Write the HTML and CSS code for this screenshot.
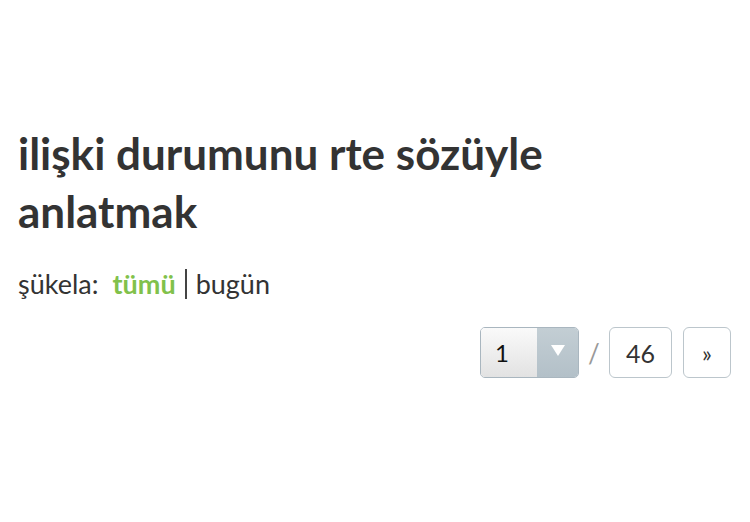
FILE: index.html
```html
<!DOCTYPE html>
<html lang="tr">
<head>
<meta charset="utf-8">
<link rel="stylesheet" href="styles.css">
</head>
<body>
<main class="page">
  <h1 class="title">ilişki durumunu rte sözüyle anlatmak</h1>
  <div class="filter">
    <span class="label">şükela:</span>
    <a class="opt active">tümü</a><span class="sep"></span><a class="opt">bugün</a>
  </div>
  <div class="pager">
    <div class="select">
      <span class="sel-val">1</span>
      <span class="sel-btn"><svg width="14" height="11" viewBox="0 0 14 11"><path d="M0 0H14L7 11Z" fill="#fff"/></svg></span>
    </div>
    <span class="slash">/</span>
    <a class="pbtn num">46</a>
    <a class="pbtn next">»</a>
  </div>
</main>
</body>
</html>
```
FILE: styles.css
```css
html, body { margin: 0; padding: 0; background: #fff; }
body { font-family: Lato, "Open Sans", sans-serif; color: #333; }
.page { padding: 124px 19px 0 18px; }
.title {
  margin: 0;
  font-size: 44px;
  line-height: 58px;
  font-weight: 700;
  color: #333;
  width: 580px;
}
.filter {
  margin-top: 27px;
  font-size: 27px;
  line-height: 34px;
  display: flex;
  align-items: center;
}
.label { margin-right: 14px; }
.opt { color: #333; }
.opt.active { color: #81c14b; font-weight: 700; }
.sep { display: inline-block; width: 2px; height: 30px; background: #444; margin: 0 9px 0 9px; }
.pager {
  margin-top: 26px;
  display: flex;
  justify-content: flex-end;
  align-items: center;
}
.select {
  display: flex;
  width: 99px;
  height: 51px;
  box-sizing: border-box;
  border: 1px solid #a9b6bf;
  border-radius: 5px;
  overflow: hidden;
}
.sel-val {
  flex: 1;
  background: linear-gradient(#fafafa, #e2e2e2);
  font-size: 24px;
  line-height: 49px;
  padding-left: 14px;
  color: #111;
}
.sel-btn {
  width: 41px;
  background: linear-gradient(#c3ced4, #b3c0c8);
  display: flex;
  justify-content: center;
  padding-top: 17px;
  box-sizing: border-box;
}
.slash { width: 30px; text-align: center; font-size: 26px; color: #999; }
.pbtn {
  display: flex;
  align-items: center;
  justify-content: center;
  height: 51px;
  box-sizing: border-box;
  border: 1px solid #bcc6cc;
  border-radius: 6px;
  color: #333;
}
.num { width: 63px; font-size: 25px; }
.next { width: 48px; margin-left: 11px; font-size: 23px; }
```
